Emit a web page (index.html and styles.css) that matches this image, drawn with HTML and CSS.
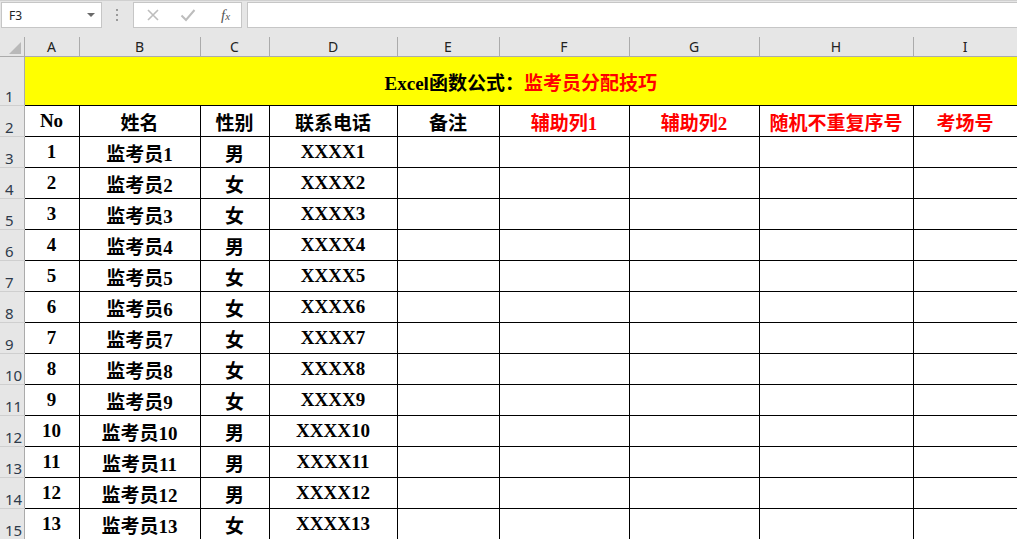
FILE: index.html
```html
<!DOCTYPE html>
<html lang="zh-CN">
<head>
    <meta charset="UTF-8">
    <title>监考员分配技巧</title>
    <link rel="stylesheet" href="styles.css">
</head>
<body>
    <!-- formula bar -->
    <div class="formula-bar">
        <div class="name-box">
            <span>F3</span>
            <span class="caret"></span>
        </div>
        <div class="grip">
            <svg width="3" height="13" viewBox="0 0 3 13"><rect x="0" y="0" width="2" height="2" fill="#9a9a9a"/><rect x="0" y="5" width="2" height="2" fill="#9a9a9a"/><rect x="0" y="10" width="2" height="2" fill="#9a9a9a"/></svg>
        </div>
        <div class="fx-box">
            <svg class="fx-icon" width="14" height="14" viewBox="0 0 14 14"><path d="M2 2 L12 12 M12 2 L2 12" stroke="#bdbdbd" stroke-width="1.6" fill="none"/></svg>
            <svg class="fx-icon" width="16" height="14" viewBox="0 0 16 14"><path d="M1.5 7.5 L6 12 L14.5 2" stroke="#bdbdbd" stroke-width="2" fill="none"/></svg>
            <span class="fx"><i>f</i><i class="fx-x">x</i></span>
        </div>
        <div class="formula-input"></div>
    </div>

    <table class="sheet">
        <colgroup>
            <col class="w-rowhead">
            <col class="w-a">
            <col class="w-b">
            <col class="w-c">
            <col class="w-d">
            <col class="w-e">
            <col class="w-f">
            <col class="w-g">
            <col class="w-h">
            <col class="w-i">
        </colgroup>
        <tr class="col-head">
            <th class="corner"><span class="corner-tri"></span></th>
            <th>A</th><th>B</th><th>C</th><th>D</th><th>E</th><th>F</th><th>G</th><th>H</th><th>I</th>
        </tr>
        <tr class="row-title">
            <td class="row-num">1</td>
            <td class="title" colspan="9">Excel函数公式：<span class="red">监考员分配技巧</span></td>
        </tr>
        <tr class="row">
            <td class="row-num">2</td>
            <td class="cell">No</td>
            <td class="cell">姓名</td>
            <td class="cell">性别</td>
            <td class="cell">联系电话</td>
            <td class="cell">备注</td>
            <td class="cell red">辅助列1</td>
            <td class="cell red">辅助列2</td>
            <td class="cell red">随机不重复序号</td>
            <td class="cell red">考场号</td>
        </tr>
        <tr class="row"><td class="row-num">3</td><td class="cell">1</td><td class="cell">监考员1</td><td class="cell">男</td><td class="cell">XXXX1</td><td class="cell"></td><td class="cell"></td><td class="cell"></td><td class="cell"></td><td class="cell"></td></tr>
        <tr class="row"><td class="row-num">4</td><td class="cell">2</td><td class="cell">监考员2</td><td class="cell">女</td><td class="cell">XXXX2</td><td class="cell"></td><td class="cell"></td><td class="cell"></td><td class="cell"></td><td class="cell"></td></tr>
        <tr class="row"><td class="row-num">5</td><td class="cell">3</td><td class="cell">监考员3</td><td class="cell">女</td><td class="cell">XXXX3</td><td class="cell"></td><td class="cell"></td><td class="cell"></td><td class="cell"></td><td class="cell"></td></tr>
        <tr class="row"><td class="row-num">6</td><td class="cell">4</td><td class="cell">监考员4</td><td class="cell">男</td><td class="cell">XXXX4</td><td class="cell"></td><td class="cell"></td><td class="cell"></td><td class="cell"></td><td class="cell"></td></tr>
        <tr class="row"><td class="row-num">7</td><td class="cell">5</td><td class="cell">监考员5</td><td class="cell">女</td><td class="cell">XXXX5</td><td class="cell"></td><td class="cell"></td><td class="cell"></td><td class="cell"></td><td class="cell"></td></tr>
        <tr class="row"><td class="row-num">8</td><td class="cell">6</td><td class="cell">监考员6</td><td class="cell">女</td><td class="cell">XXXX6</td><td class="cell"></td><td class="cell"></td><td class="cell"></td><td class="cell"></td><td class="cell"></td></tr>
        <tr class="row"><td class="row-num">9</td><td class="cell">7</td><td class="cell">监考员7</td><td class="cell">女</td><td class="cell">XXXX7</td><td class="cell"></td><td class="cell"></td><td class="cell"></td><td class="cell"></td><td class="cell"></td></tr>
        <tr class="row"><td class="row-num">10</td><td class="cell">8</td><td class="cell">监考员8</td><td class="cell">女</td><td class="cell">XXXX8</td><td class="cell"></td><td class="cell"></td><td class="cell"></td><td class="cell"></td><td class="cell"></td></tr>
        <tr class="row"><td class="row-num">11</td><td class="cell">9</td><td class="cell">监考员9</td><td class="cell">女</td><td class="cell">XXXX9</td><td class="cell"></td><td class="cell"></td><td class="cell"></td><td class="cell"></td><td class="cell"></td></tr>
        <tr class="row"><td class="row-num">12</td><td class="cell">10</td><td class="cell">监考员10</td><td class="cell">男</td><td class="cell">XXXX10</td><td class="cell"></td><td class="cell"></td><td class="cell"></td><td class="cell"></td><td class="cell"></td></tr>
        <tr class="row"><td class="row-num">13</td><td class="cell">11</td><td class="cell">监考员11</td><td class="cell">男</td><td class="cell">XXXX11</td><td class="cell"></td><td class="cell"></td><td class="cell"></td><td class="cell"></td><td class="cell"></td></tr>
        <tr class="row"><td class="row-num">14</td><td class="cell">12</td><td class="cell">监考员12</td><td class="cell">男</td><td class="cell">XXXX12</td><td class="cell"></td><td class="cell"></td><td class="cell"></td><td class="cell"></td><td class="cell"></td></tr>
        <tr class="row"><td class="row-num">15</td><td class="cell">13</td><td class="cell">监考员13</td><td class="cell">女</td><td class="cell">XXXX13</td><td class="cell"></td><td class="cell"></td><td class="cell"></td><td class="cell"></td><td class="cell"></td></tr>
    </table>
</body>
</html>
```

FILE: styles.css
```css
body {
    margin: 0;
    background-color: #ffffff;
    font-family: "Liberation Serif", "SimSun", "Noto Sans CJK SC", serif;
    overflow: hidden;
}

/* formula bar */
.formula-bar {
    display: flex;
    align-items: flex-start;
    height: 37px;
    box-sizing: border-box;
    padding-top: 1px;
    background-color: #e6e6e6;
    border-top: 1px solid #d0d0d0;
    font-family: "Noto Sans", sans-serif;
}

.name-box {
    display: flex;
    align-items: center;
    justify-content: space-between;
    width: 101px;
    height: 26px;
    margin-left: 1px;
    padding: 0 6px 0 7px;
    box-sizing: border-box;
    background-color: #ffffff;
    border: 1px solid #c6c6c6;
    font-size: 12px;
    color: #222222;
}

.caret {
    width: 0;
    height: 0;
    border-left: 4px solid transparent;
    border-right: 4px solid transparent;
    border-top: 4px solid #6a6a6a;
}

.grip {
    width: 31px;
    height: 26px;
    display: flex;
    align-items: center;
    justify-content: center;
}

.fx-box {
    display: flex;
    align-items: center;
    width: 109px;
    height: 26px;
    box-sizing: border-box;
    padding-left: 12px;
    background-color: #ffffff;
    border: 1px solid #c6c6c6;
}

.fx-icon {
    margin-right: 20px;
}

.fx {
    margin-left: 5px;
    font-family: "Liberation Serif", serif;
    font-size: 15px;
    color: #555555;
}

.fx-x {
    font-size: 11px;
}

.formula-input {
    flex: 1;
    height: 26px;
    margin-left: 5px;
    box-sizing: border-box;
    background-color: #ffffff;
    border: 1px solid #c6c6c6;
    border-right: none;
}

/* sheet */
.sheet {
    border-collapse: collapse;
    table-layout: fixed;
    width: 1017px;
}

.w-rowhead { width: 24px; }
.w-a { width: 55px; }
.w-b { width: 121px; }
.w-c { width: 69px; }
.w-d { width: 128px; }
.w-e { width: 102px; }
.w-f { width: 130px; }
.w-g { width: 130px; }
.w-h { width: 154px; }
.w-i { width: 104px; }

.col-head th {
    height: 19px;
    padding: 0;
    background-color: #e6e6e6;
    border-right: 1px solid #ababab;
    border-bottom: 1px solid #ababab;
    font-family: "Noto Sans", sans-serif;
    font-size: 14px;
    font-weight: normal;
    line-height: 18px;
    color: #222222;
    vertical-align: bottom;
}

.corner {
    position: relative;
}

.corner-tri {
    position: absolute;
    right: 3px;
    bottom: 2px;
    width: 0;
    height: 0;
    border-left: 12px solid transparent;
    border-bottom: 12px solid #b9b9b9;
}

.row-num {
    padding: 0 0 0 5px;
    background-color: #e6e6e6;
    border-right: 1px solid #ababab;
    border-bottom: 1px solid #cfcfcf;
    font-family: "Noto Sans", sans-serif;
    font-size: 15px;
    line-height: 18px;
    color: #2e3a4a;
    text-align: left;
    vertical-align: bottom;
    white-space: nowrap;
}

.row-title {
    height: 49px;
}

.row {
    height: 31px;
}

.title {
    padding: 0;
    background-color: #ffff00;
    border-bottom: 1px solid #000000;
    font-size: 19px;
    font-weight: bold;
    text-align: center;
    color: #000000;
}

.cell {
    padding: 0;
    border: 1px solid #000000;
    font-size: 19px;
    font-weight: bold;
    text-align: center;
    color: #000000;
    white-space: nowrap;
}

.red {
    color: #ff0000;
}
```
